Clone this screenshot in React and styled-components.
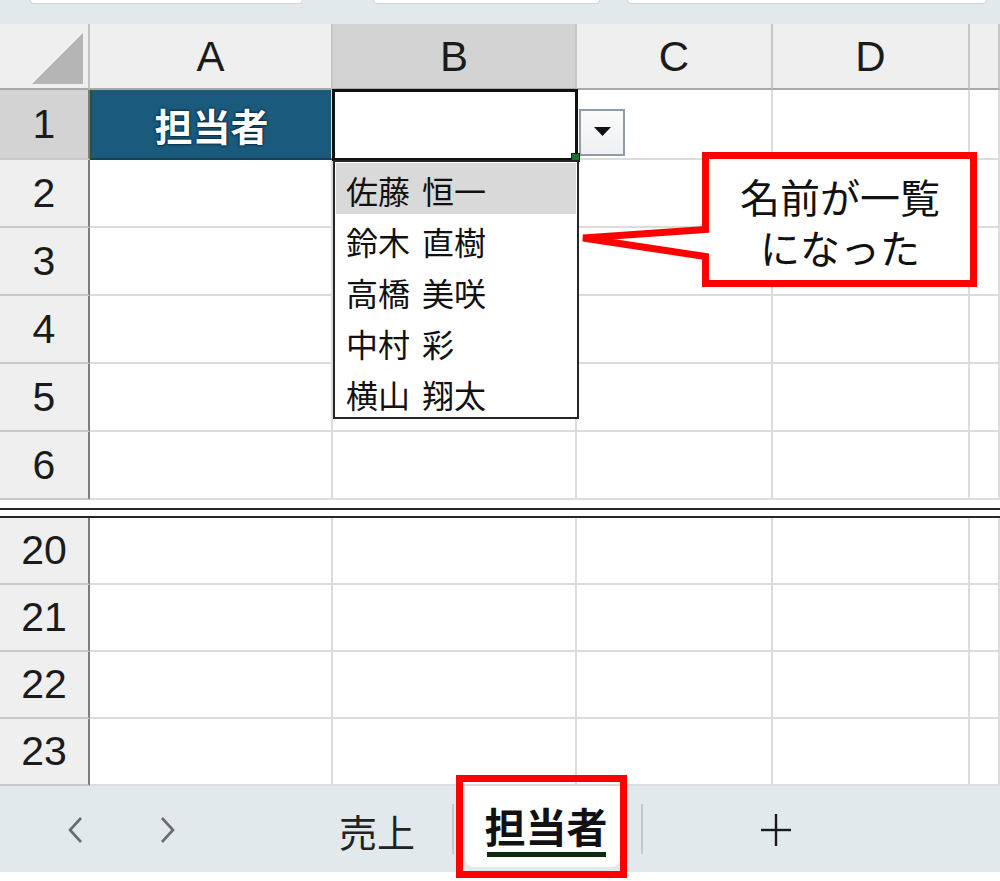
import React from "react";
import styled, { createGlobalStyle } from "styled-components";

const JP = `"Noto Sans CJK JP", sans-serif`;
const LATIN = `"Liberation Sans", "Noto Sans CJK JP", sans-serif`;

const COLUMNS = ["A", "B", "C", "D", ""];
const TOP_ROWS = [1, 2, 3, 4, 5, 6];
const BOTTOM_ROWS = [20, 21, 22, 23];
const NAMES = [
  ["佐藤", "恒一"],
  ["鈴木", "直樹"],
  ["高橋", "美咲"],
  ["中村", "彩"],
  ["横山", "翔太"],
];

const App = () => {
  return (
    <Page>
      <GlobalStyle />
      <TopBar>
        <FieldStub $width={273} />
        <FieldStub $width={227} $gap={70} />
        <FieldStub $width={360} $gap={27} />
      </TopBar>

      <Grid $rows="66px 70px repeat(5, 68px)">
        <Corner>
          <svg width="51" height="51" viewBox="0 0 51 51">
            <polygon points="51,0 51,51 0,51" fill="#b5b5b5" />
          </svg>
        </Corner>
        {COLUMNS.map((c) => (
          <ColHead key={c || "e"} $active={c === "B"}>
            {c}
          </ColHead>
        ))}
        {TOP_ROWS.map((r) => (
          <React.Fragment key={r}>
            <RowHead $active={r === 1}>{r}</RowHead>
            {COLUMNS.map((c) => {
              if (r === 1 && c === "A") {
                return <TitleCell key={c}>担当者</TitleCell>;
              }
              if (r === 1 && c === "B") {
                return (
                  <ActiveCell key={c}>
                    <FillHandle />
                  </ActiveCell>
                );
              }
              return <Cell key={c || "e"} />;
            })}
          </React.Fragment>
        ))}
      </Grid>

      <Break>
        <BreakLine />
        <BreakLine />
      </Break>

      <Grid $rows="repeat(4, 67px)">
        {BOTTOM_ROWS.map((r) => (
          <React.Fragment key={r}>
            <RowHead>{r}</RowHead>
            {COLUMNS.map((c) => (
              <Cell key={c || "e"} />
            ))}
          </React.Fragment>
        ))}
      </Grid>

      <TabBar>
        <NavArea>
          <svg width="16" height="28" viewBox="0 0 16 28">
            <polyline points="14,2 3,14 14,26" fill="none" stroke="#6b6b6b" strokeWidth="2.6" />
          </svg>
          <svg width="16" height="28" viewBox="0 0 16 28">
            <polyline points="2,2 13,14 2,26" fill="none" stroke="#6b6b6b" strokeWidth="2.6" />
          </svg>
        </NavArea>
        <SheetTab>売上</SheetTab>
        <TabDivider />
        <ActiveTab>
          <ActiveLabel>担当者</ActiveLabel>
          <TabUnderline />
        </ActiveTab>
        <TabDivider $gap={20} />
        <AddSheet>
          <svg width="32" height="34" viewBox="0 0 32 34">
            <line x1="16" y1="1" x2="16" y2="33" stroke="#1a1a1a" strokeWidth="2.4" />
            <line x1="1" y1="17" x2="31" y2="17" stroke="#1a1a1a" strokeWidth="2.4" />
          </svg>
        </AddSheet>
      </TabBar>

      <DropButton>
        <svg width="17" height="9" viewBox="0 0 17 9">
          <polygon points="0,0 17,0 8.5,9" fill="#111" />
        </svg>
      </DropButton>

      <NameList>
        {NAMES.map(([family, given], i) => (
          <NameItem key={family} $hover={i === 0}>
            <span>{family}</span>
            <span>{given}</span>
          </NameItem>
        ))}
      </NameList>

      <Callout>
        <svg width="400" height="136" viewBox="0 0 400 136">
          <path
            d="M127.5 3.5 H395.5 V131.5 H127.5 V104.5 L5 86 L127.5 77.5 Z"
            fill="#fff"
            stroke="#ff0000"
            strokeWidth="7"
          />
        </svg>
        <CalloutText>
          名前が一覧
          <br />
          になった
        </CalloutText>
      </Callout>

      <TabMark />
    </Page>
  );
};
export default App;

const GlobalStyle = createGlobalStyle`
  html, body {
    margin: 0;
    padding: 0;
    background: #fff;
  }
  * {
    box-sizing: border-box;
  }
`;

const Page = styled.div`
  position: relative;
  width: 1000px;
  height: 881px;
  overflow: hidden;
  background: #fff;
  font-family: ${LATIN};
  color: #1e1e1e;
`;

const TopBar = styled.div`
  height: 24px;
  background: #e1e9ed;
  display: flex;
  align-items: flex-start;
  padding-left: 30px;
`;

const FieldStub = styled.div`
  width: ${(p) => p.$width}px;
  margin-left: ${(p) => p.$gap || 0}px;
  height: 4px;
  background: #fff;
  border: 1px solid #cfd5d8;
  border-top: none;
  border-radius: 0 0 6px 6px;
`;

const Grid = styled.div`
  display: grid;
  grid-template-columns: 90px 243px 244px 196px 197px 1fr;
  grid-template-rows: ${(p) => p.$rows};
`;

const Corner = styled.div`
  background: #efefef;
  border-right: 2px solid #c3c3c3;
  border-bottom: 2px solid #a9a9a9;
  display: flex;
  justify-content: flex-end;
  align-items: flex-end;
  padding: 0 5px 4px 0;
`;

const ColHead = styled.div`
  background: ${(p) => (p.$active ? "#d3d3d3" : "#efefef")};
  border-right: 2px solid #c6c6c6;
  border-bottom: 2px solid #a9a9a9;
  display: flex;
  align-items: center;
  justify-content: center;
  font-size: 42px;
  padding-top: 2px;
  color: #1b1b1b;
`;

const RowHead = styled.div`
  background: ${(p) => (p.$active ? "#d3d3d3" : "#efefef")};
  border-right: 2px solid #7d7d7d;
  border-bottom: 2px solid #c9c9c9;
  display: flex;
  align-items: center;
  justify-content: center;
  font-size: 41px;
  color: #1b1b1b;
`;

const Cell = styled.div`
  border-right: 2px solid #dcdcdc;
  border-bottom: 2px solid #dcdcdc;
  background: #fff;
`;

const TitleCell = styled(Cell)`
  background: #1a5a7d;
  border-left: 2px solid #1f5a2a;
  border-bottom-color: #173f57;
  display: flex;
  align-items: center;
  justify-content: center;
  font-family: ${JP};
  font-weight: 700;
  font-size: 38px;
  color: #fff;
  text-shadow: 0 0 2px #001b30, 0 0 3px #001b30;
`;

const ActiveCell = styled(Cell)`
  position: relative;
  z-index: 1;
  outline: 3px solid #111;
  outline-offset: -2px;
`;

const FillHandle = styled.div`
  position: absolute;
  right: -5px;
  bottom: -4px;
  width: 9px;
  height: 9px;
  background: #1f6f34;
  border: 1px solid #0b2a12;
  z-index: 3;
`;

const Break = styled.div`
  height: 18px;
  padding-top: 8px;
  display: flex;
  flex-direction: column;
  gap: 6px;
`;

const BreakLine = styled.div`
  height: 2px;
  background: #262626;
`;

const TabBar = styled.div`
  height: 86px;
  margin-bottom: 9px;
  background: #e1e9ed;
  display: flex;
  align-items: center;
`;

const NavArea = styled.div`
  width: 300px;
  display: flex;
  align-items: center;
  gap: 77px;
  padding-left: 67px;
  padding-top: 2px;
`;

const SheetTab = styled.div`
  width: 152px;
  text-align: center;
  padding-left: 2px;
  font-family: ${JP};
  font-size: 38px;
  color: #222;
  padding-top: 2px;
`;

const TabDivider = styled.div`
  width: 2px;
  height: 50px;
  margin-left: ${(p) => p.$gap || 0}px;
  background: #c2c8cc;
`;

const ActiveTab = styled.div`
  align-self: flex-start;
  width: 156px;
  height: 81px;
  margin-left: 11px;
  background: #fff;
  border-radius: 0 0 9px 9px;
  display: flex;
  flex-direction: column;
  align-items: center;
  padding-top: 13px;
`;

const ActiveLabel = styled.div`
  font-family: ${JP};
  font-weight: 700;
  font-size: 41px;
  line-height: 52px;
  color: #111;
  padding-left: 6px;
`;

const TabUnderline = styled.div`
  width: 119px;
  height: 5px;
  margin-top: 1px;
  margin-left: 6px;
  background: #0c2a10;
`;

const AddSheet = styled.div`
  margin-left: 117px;
  display: flex;
  padding-top: 2px;
`;

const DropButton = styled.div`
  position: absolute;
  left: 579px;
  top: 109px;
  width: 46px;
  height: 47px;
  background: linear-gradient(#fafafa, #eef0f2);
  border: 2px solid #8e9caa;
  display: flex;
  align-items: center;
  justify-content: center;
  padding-bottom: 3px;
`;

const NameList = styled.div`
  position: absolute;
  left: 333px;
  top: 160px;
  width: 246px;
  height: 259px;
  background: #fff;
  border: 2px solid #262626;
  padding: 1px;
  z-index: 2;
`;

const NameItem = styled.div`
  height: 51px;
  display: flex;
  align-items: center;
  gap: 12px;
  padding-left: 10px;
  padding-top: 2px;
  background: ${(p) => (p.$hover ? "#d9d9d9" : "transparent")};
  font-family: ${JP};
  font-size: 32px;
  color: #111;
`;

const Callout = styled.div`
  position: absolute;
  left: 578px;
  top: 152px;
  width: 400px;
  height: 136px;
  z-index: 3;
`;

const CalloutText = styled.div`
  position: absolute;
  left: 124px;
  top: 0;
  width: 276px;
  height: 136px;
  display: flex;
  align-items: center;
  justify-content: center;
  text-align: center;
  font-family: ${JP};
  font-size: 40px;
  line-height: 51px;
  color: #111;
  padding-top: 4px;
`;

const TabMark = styled.div`
  position: absolute;
  left: 456px;
  top: 775px;
  width: 171px;
  height: 103px;
  border: 7px solid #ff0000;
  z-index: 3;
`;
